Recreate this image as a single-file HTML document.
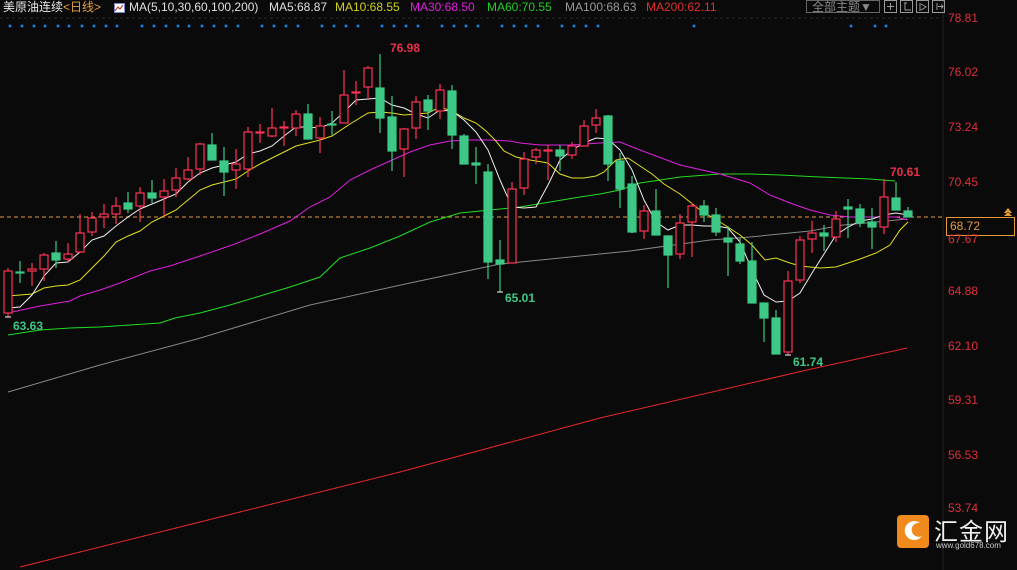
<!DOCTYPE html>
<html><head><meta charset="utf-8"><style>
html,body{margin:0;padding:0;background:#0a0a0a;width:1017px;height:570px;overflow:hidden;position:relative;font-family:"Liberation Sans","Noto Sans CJK SC",sans-serif}
.hd{position:absolute;top:0;left:3px;font-size:12px;white-space:nowrap;line-height:14px}
.hd span{position:absolute;top:0}
.ax{position:absolute;left:948px;font-size:12px;color:#e0303a}
.lb{position:absolute;font-size:12px;font-weight:bold}
</style></head><body>
<svg width="1017" height="570" style="position:absolute;left:0;top:0">
<g fill="#1a7fd8">
<circle cx="10" cy="26" r="1.5"/><circle cx="22" cy="26" r="1.5"/><circle cx="34" cy="26" r="1.5"/><circle cx="45" cy="26" r="1.5"/><circle cx="58" cy="26" r="1.5"/><circle cx="69" cy="26" r="1.5"/><circle cx="82" cy="26" r="1.5"/><circle cx="94" cy="26" r="1.5"/><circle cx="106" cy="26" r="1.5"/><circle cx="117" cy="26" r="1.5"/>
<circle cx="142" cy="26" r="1.5"/><circle cx="154" cy="26" r="1.5"/><circle cx="166" cy="26" r="1.5"/><circle cx="178" cy="26" r="1.5"/><circle cx="189" cy="26" r="1.5"/><circle cx="202" cy="26" r="1.5"/><circle cx="214" cy="26" r="1.5"/><circle cx="226" cy="26" r="1.5"/><circle cx="238" cy="26" r="1.5"/>
<circle cx="262" cy="26" r="1.5"/><circle cx="274" cy="26" r="1.5"/><circle cx="286" cy="26" r="1.5"/><circle cx="298" cy="26" r="1.5"/>
<circle cx="322" cy="26" r="1.5"/><circle cx="334" cy="26" r="1.5"/><circle cx="346" cy="26" r="1.5"/><circle cx="358" cy="26" r="1.5"/>
<circle cx="382" cy="26" r="1.5"/><circle cx="394" cy="26" r="1.5"/><circle cx="406" cy="26" r="1.5"/><circle cx="418" cy="26" r="1.5"/>
<circle cx="442" cy="26" r="1.5"/><circle cx="454" cy="26" r="1.5"/><circle cx="466" cy="26" r="1.5"/><circle cx="478" cy="26" r="1.5"/>
<circle cx="502" cy="26" r="1.5"/><circle cx="514" cy="26" r="1.5"/><circle cx="526" cy="26" r="1.5"/><circle cx="538" cy="26" r="1.5"/>
<circle cx="562" cy="26" r="1.5"/><circle cx="574" cy="26" r="1.5"/><circle cx="586" cy="26" r="1.5"/><circle cx="598" cy="26" r="1.5"/>
<circle cx="694" cy="26" r="1.5"/><circle cx="851" cy="26" r="1.5"/><circle cx="875" cy="26" r="1.5"/><circle cx="886" cy="26" r="1.5"/>
</g>
<line x1="0" y1="18" x2="943" y2="18" stroke="#2a2a2a" stroke-dasharray="3,3"/>
<line x1="943" y1="0" x2="943" y2="570" stroke="#222"/>
<line x1="0" y1="217" x2="943" y2="217" stroke="#e89a3a" stroke-dasharray="4,3"/>
<g fill="none" stroke-width="1">
<polyline stroke="#e82828" points="20,567 200,522 400,472 600,418 807,370 907,348"/>
<polyline stroke="#888" points="8,392 100,365 197,339 310,305 410,283 500,264 630,251 710,240 750,237 810,231 843,225 877,222 907,219"/>
<polyline stroke="#22dd22" points="8,335 40,330 70,328 100,327 130,325 160,323 175,318 200,313 230,305 260,296 290,287 320,277 340,258 370,248 400,236 430,222 460,213 490,210 520,207 550,202 580,197 600,194 620,190 640,183 680,177 720,174 750,174 780,175 820,177 870,179 895,181"/>
<polyline stroke="#e020e0" points="8,313 40,306 70,301 80,296 100,290 120,283 150,271 170,266 200,256 235,244 260,234 290,221 310,207 330,197 350,180 370,170 390,161 410,152 430,145 450,141 470,140 490,140 510,141 520,143 540,145 570,145 600,143 620,142 640,150 680,165 720,174 750,183 770,195 790,203 810,210 830,215 850,217 880,217 896,217 908,220"/>
<polyline stroke="#e0e020" points="8,296 32,294 44,288 56,286 68,285 80,280 92,268 104,256 116,242 128,236 140,231 152,222 164,216 176,210 188,200 200,190 212,185 224,182 236,179 248,171 260,164 272,158 284,152 296,146 308,143 320,140 332,136 350,124 368,113 380,112 392,113 404,115 416,114 428,113 440,107 452,111 464,118 476,123 486,131 495,140 504,151 516,157 530,160 548,163 560,174 572,178 584,178 596,176 604,172 616,160 628,158 640,166 652,174 664,184 680,194 700,210 720,222 740,235 752,245 765,260 776,258 790,263 800,266 820,268 836,267 860,259 876,253 890,245 900,230 908,222"/>
<polyline stroke="#f0f0f0" points="8,308 20,307 32,295 44,276 56,263 68,262 80,252 92,240 104,236 116,226 128,217 140,209 152,204 164,199 176,194 188,182 200,173 212,168 224,165 236,162 248,154 260,151 272,146 284,136 296,127 308,127 320,128 332,123 344,112 356,100 368,99 380,98 392,105 404,108 416,114 428,118 440,110 452,111 464,120 476,132 488,150 500,180 512,207 524,208 536,207 548,185 560,160 572,150 584,143 596,138 608,139 620,150 632,170 644,200 656,222 668,230 680,225 692,225 704,226 716,226 728,228 740,242 752,270 764,295 776,302 788,301 800,293 812,273 824,254 836,235 848,227 860,221 872,219 884,215 896,213 908,215"/>
</g>
<g stroke-width="1.2">
<g stroke="#ff3355" fill="#0a0a0a">
<line x1="8" y1="268" x2="8" y2="317"/><rect x="4" y="271" width="8" height="42"/>
<line x1="32" y1="263" x2="32" y2="286"/><rect x="28" y="269" width="8" height="2"/>
<line x1="44" y1="253" x2="44" y2="281"/><rect x="40" y="255" width="8" height="14"/>
<line x1="68" y1="243" x2="68" y2="262"/><rect x="64" y="254" width="8" height="5"/>
<line x1="80" y1="214" x2="80" y2="253"/><rect x="76" y="233" width="8" height="19"/>
<line x1="92" y1="212" x2="92" y2="236"/><rect x="88" y="218" width="8" height="14"/>
<line x1="104" y1="204" x2="104" y2="228"/><rect x="100" y="214" width="8" height="3"/>
<line x1="116" y1="197" x2="116" y2="224"/><rect x="112" y="206" width="8" height="8"/>
<line x1="140" y1="187" x2="140" y2="222"/><rect x="136" y="193" width="8" height="13"/>
<line x1="164" y1="179" x2="164" y2="217"/><rect x="160" y="191" width="8" height="6"/>
<line x1="176" y1="168" x2="176" y2="197"/><rect x="172" y="178" width="8" height="12"/>
<line x1="188" y1="157" x2="188" y2="180"/><rect x="184" y="170" width="8" height="9"/>
<line x1="200" y1="143" x2="200" y2="175"/><rect x="196" y="144" width="8" height="25"/>
<line x1="236" y1="149" x2="236" y2="189"/><rect x="232" y="164" width="8" height="6"/>
<line x1="248" y1="127" x2="248" y2="177"/><rect x="244" y="132" width="8" height="37"/>
<line x1="260" y1="124" x2="260" y2="143"/><rect x="256" y="132" width="8" height="1"/>
<line x1="272" y1="108" x2="272" y2="137"/><rect x="268" y="128" width="8" height="8"/>
<line x1="284" y1="121" x2="284" y2="146"/><rect x="280" y="127" width="8" height="1"/>
<line x1="296" y1="110" x2="296" y2="136"/><rect x="292" y="114" width="8" height="14"/>
<line x1="320" y1="117" x2="320" y2="153"/><rect x="316" y="126" width="8" height="12"/>
<line x1="344" y1="70" x2="344" y2="123"/><rect x="340" y="95" width="8" height="28"/>
<line x1="356" y1="81" x2="356" y2="105"/><rect x="352" y="92" width="8" height="1"/>
<line x1="368" y1="66" x2="368" y2="99"/><rect x="364" y="68" width="8" height="19"/>
<line x1="404" y1="128" x2="404" y2="177"/><rect x="400" y="129" width="8" height="20"/>
<line x1="416" y1="96" x2="416" y2="139"/><rect x="412" y="102" width="8" height="26"/>
<line x1="440" y1="84" x2="440" y2="119"/><rect x="436" y="90" width="8" height="21"/>
<line x1="512" y1="182" x2="512" y2="263"/><rect x="508" y="189" width="8" height="74"/>
<line x1="524" y1="152" x2="524" y2="195"/><rect x="520" y="159" width="8" height="29"/>
<line x1="536" y1="148" x2="536" y2="164"/><rect x="532" y="150" width="8" height="7"/>
<line x1="548" y1="145" x2="548" y2="180"/><rect x="544" y="150" width="8" height="1"/>
<line x1="572" y1="142" x2="572" y2="159"/><rect x="568" y="146" width="8" height="9"/>
<line x1="584" y1="120" x2="584" y2="146"/><rect x="580" y="126" width="8" height="20"/>
<line x1="596" y1="109" x2="596" y2="133"/><rect x="592" y="118" width="8" height="7"/>
<line x1="644" y1="205" x2="644" y2="239"/><rect x="640" y="211" width="8" height="20"/>
<line x1="680" y1="214" x2="680" y2="259"/><rect x="676" y="223" width="8" height="31"/>
<line x1="692" y1="203" x2="692" y2="257"/><rect x="688" y="206" width="8" height="16"/>
<line x1="788" y1="271" x2="788" y2="355"/><rect x="784" y="281" width="8" height="71"/>
<line x1="800" y1="236" x2="800" y2="283"/><rect x="796" y="240" width="8" height="40"/>
<line x1="812" y1="221" x2="812" y2="253"/><rect x="808" y="233" width="8" height="6"/>
<line x1="836" y1="211" x2="836" y2="242"/><rect x="832" y="219" width="8" height="18"/>
<line x1="884" y1="179" x2="884" y2="234"/><rect x="880" y="197" width="8" height="30"/>
</g>
<g stroke="#3dc985" fill="#3dc985">
<line x1="20" y1="261" x2="20" y2="283"/><rect x="16" y="272" width="8" height="1"/>
<line x1="56" y1="241" x2="56" y2="268"/><rect x="52" y="253" width="8" height="7"/>
<line x1="128" y1="192" x2="128" y2="213"/><rect x="124" y="203" width="8" height="6"/>
<line x1="152" y1="180" x2="152" y2="203"/><rect x="148" y="193" width="8" height="5"/>
<line x1="212" y1="133" x2="212" y2="160"/><rect x="208" y="145" width="8" height="15"/>
<line x1="224" y1="147" x2="224" y2="196"/><rect x="220" y="161" width="8" height="11"/>
<line x1="308" y1="104" x2="308" y2="139"/><rect x="304" y="114" width="8" height="25"/>
<line x1="332" y1="111" x2="332" y2="135"/><rect x="328" y="124" width="8" height="1"/>
<line x1="380" y1="54" x2="380" y2="133"/><rect x="376" y="88" width="8" height="30"/>
<line x1="392" y1="96" x2="392" y2="171"/><rect x="388" y="117" width="8" height="34"/>
<line x1="428" y1="95" x2="428" y2="130"/><rect x="424" y="100" width="8" height="11"/>
<line x1="452" y1="85" x2="452" y2="149"/><rect x="448" y="91" width="8" height="44"/>
<line x1="464" y1="134" x2="464" y2="164"/><rect x="460" y="136" width="8" height="28"/>
<line x1="476" y1="147" x2="476" y2="184"/><rect x="472" y="163" width="8" height="2"/>
<line x1="488" y1="164" x2="488" y2="279"/><rect x="484" y="172" width="8" height="90"/>
<line x1="500" y1="240" x2="500" y2="292"/><rect x="496" y="260" width="8" height="4"/>
<line x1="560" y1="145" x2="560" y2="171"/><rect x="556" y="150" width="8" height="6"/>
<line x1="608" y1="115" x2="608" y2="181"/><rect x="604" y="116" width="8" height="48"/>
<line x1="620" y1="153" x2="620" y2="208"/><rect x="616" y="161" width="8" height="28"/>
<line x1="632" y1="176" x2="632" y2="233"/><rect x="628" y="184" width="8" height="48"/>
<line x1="656" y1="189" x2="656" y2="235"/><rect x="652" y="211" width="8" height="24"/>
<line x1="668" y1="235" x2="668" y2="288"/><rect x="664" y="236" width="8" height="19"/>
<line x1="704" y1="200" x2="704" y2="222"/><rect x="700" y="206" width="8" height="9"/>
<line x1="716" y1="208" x2="716" y2="236"/><rect x="712" y="215" width="8" height="17"/>
<line x1="728" y1="226" x2="728" y2="276"/><rect x="724" y="238" width="8" height="4"/>
<line x1="740" y1="238" x2="740" y2="264"/><rect x="736" y="244" width="8" height="17"/>
<line x1="752" y1="242" x2="752" y2="303"/><rect x="748" y="261" width="8" height="42"/>
<line x1="764" y1="303" x2="764" y2="342"/><rect x="760" y="303" width="8" height="15"/>
<line x1="776" y1="310" x2="776" y2="354"/><rect x="772" y="318" width="8" height="36"/>
<line x1="824" y1="225" x2="824" y2="251"/><rect x="820" y="233" width="8" height="3"/>
<line x1="848" y1="199" x2="848" y2="238"/><rect x="844" y="207" width="8" height="2"/>
<line x1="860" y1="204" x2="860" y2="227"/><rect x="856" y="209" width="8" height="14"/>
<line x1="872" y1="208" x2="872" y2="249"/><rect x="868" y="222" width="8" height="5"/>
<line x1="896" y1="182" x2="896" y2="210"/><rect x="892" y="198" width="8" height="12"/>
<line x1="908" y1="207" x2="908" y2="217"/><rect x="904" y="211" width="8" height="6"/>
</g>
</g>
<g stroke="#fff" stroke-width="1"><line x1="5" y1="317" x2="11" y2="317"/><line x1="497" y1="292" x2="503" y2="292"/><line x1="785" y1="355" x2="791" y2="355"/></g>
<rect x="946.5" y="217.5" width="68" height="18" fill="#0a0a0a" stroke="#e89a3a"/>
<path d="M1004 213 L1008 208 L1012 213 Z M1004 216 L1012 216 L1008 212 Z" fill="#e89a3a"/>
<rect x="806.5" y="0.5" width="73" height="12" fill="none" stroke="#666"/>
<g fill="none" stroke="#999"><rect x="884.5" y="0.5" width="12" height="12"/><rect x="900.5" y="0.5" width="12" height="12"/><rect x="916.5" y="0.5" width="12" height="12"/><rect x="932.5" y="0.5" width="12" height="12"/>
<path d="M890.5 3v7M887 6.5h7M905 3v7h6M904 3h3M920 3v8M921 4l5 3-5 3M937 3v7M938 6.5h5M941 4.5l2 2-2 2"/></g>
<rect x="897" y="515" width="32" height="33" rx="4" fill="#f08a1c"/>
<path d="M920 523 A9.5 9.5 0 1 0 922 536 A7 7 0 1 1 920 523 Z" fill="#fff"/>
<rect x="114.5" y="3.5" width="10" height="9" fill="#fff" stroke="#7788cc"/><path d="M115 11l3-4 2 2 3-4" stroke="#c02020" fill="none"/>
</svg>
<div class="hd">
<span style="left:0;color:#e8e8e8">美原油连续</span>
<span style="left:60px;color:#e8a040">&lt;日线&gt;</span>
<span style="left:126px;color:#e0e0e0">MA(5,10,30,60,100,200)</span>
<span style="left:266px;color:#e0e0e0">MA5:68.87</span>
<span style="left:332px;color:#d0d020">MA10:68.55</span>
<span style="left:407px;color:#e020e0">MA30:68.50</span>
<span style="left:484px;color:#22cc22">MA60:70.55</span>
<span style="left:562px;color:#999">MA100:68.63</span>
<span style="left:643px;color:#e03030">MA200:62.11</span>
<span style="left:809px;color:#888">全部主题▼</span>
</div>
<div class="ax" style="top:11px">78.81</div>
<div class="ax" style="top:65px">76.02</div>
<div class="ax" style="top:120px">73.24</div>
<div class="ax" style="top:175px">70.45</div>
<div class="ax" style="top:232px">67.67</div>
<div class="ax" style="top:219px;left:950px;color:#e89a3a;background:#0a0a0a;width:60px">68.72</div>
<div class="ax" style="top:284px">64.88</div>
<div class="ax" style="top:339px">62.10</div>
<div class="ax" style="top:393px">59.31</div>
<div class="ax" style="top:448px">56.53</div>
<div class="ax" style="top:501px">53.74</div>
<div class="lb" style="left:390px;top:41px;color:#e8304a">76.98</div>
<div class="lb" style="left:13px;top:319px;color:#3dc985">63.63</div>
<div class="lb" style="left:505px;top:291px;color:#3dc985">65.01</div>
<div class="lb" style="left:793px;top:355px;color:#3dc985">61.74</div>
<div class="lb" style="left:890px;top:165px;color:#e8304a">70.61</div>
<div style="position:absolute;left:934px;top:512px;font-size:24px;color:#f0f0f0;letter-spacing:1px">汇金网</div>
<div style="position:absolute;left:936px;top:541px;font-size:8px;color:#ccc">www.gold678.com</div>
</body></html>
